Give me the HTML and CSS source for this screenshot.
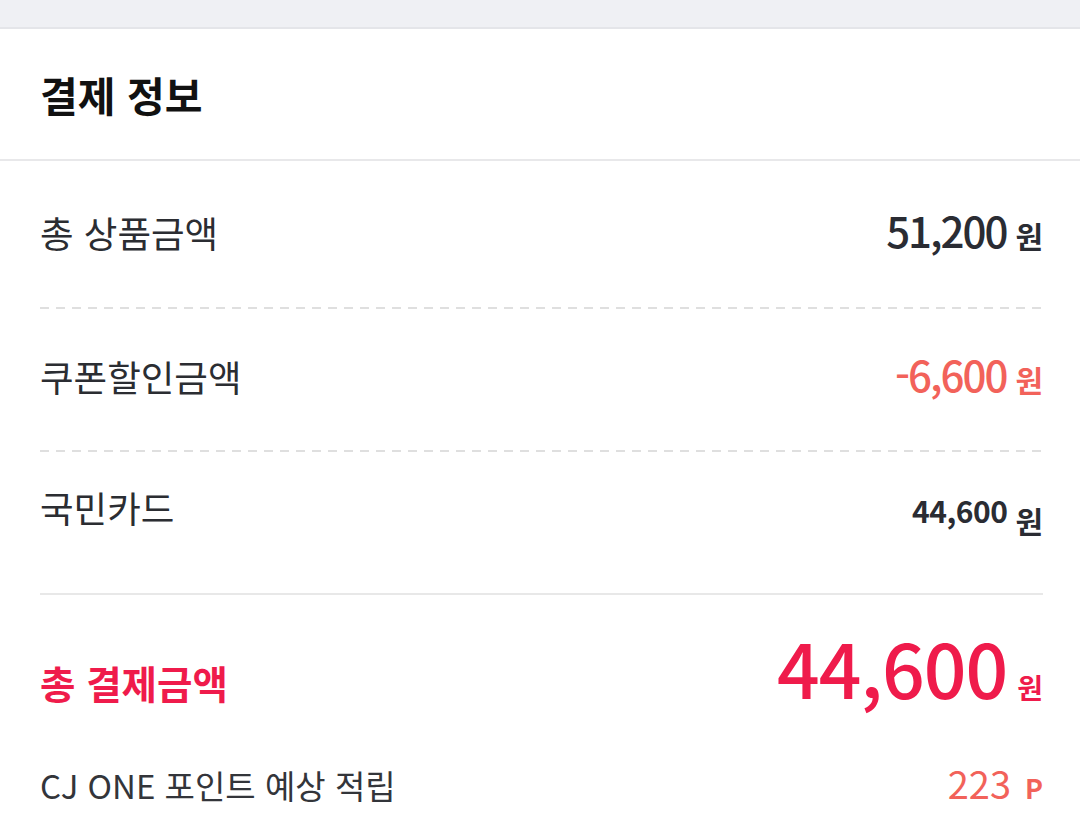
FILE: index.html
```html
<!DOCTYPE html>
<html lang="ko">
<head>
<meta charset="utf-8">
<link rel="stylesheet" href="styles.css">
</head>
<body>
<div class="topbar"></div>
<header class="header"><h1 class="title">결제 정보</h1></header>
<section class="list">
  <div class="row row-1 dashed">
    <span class="label">총 상품금액</span>
    <span class="amount"><span class="num">51,200</span><span class="unit">원</span></span>
  </div>
  <div class="row row-2 dashed">
    <span class="label">쿠폰할인금액</span>
    <span class="amount coupon"><span class="num">-6,600</span><span class="unit">원</span></span>
  </div>
  <div class="row row-3">
    <span class="label">국민카드</span>
    <span class="amount small"><span class="num">44,600</span><span class="unit">원</span></span>
  </div>
  <div class="solid"></div>
  <div class="row total">
    <span class="label">총 결제금액</span>
    <span class="amount"><span class="num">44,600</span><span class="unit">원</span></span>
  </div>
  <div class="row point">
    <span class="label">CJ ONE 포인트 예상 적립</span>
    <span class="amount"><span class="num">223</span><span class="unit">P</span></span>
  </div>
</section>
</body>
</html>
```
FILE: styles.css
```css
html, body {
  margin: 0;
  padding: 0;
  background: #fff;
  font-family: "Noto Sans CJK KR", "Noto Sans", sans-serif;
  color: #2b2d32;
}
.topbar {
  height: 27px;
  background: #eff0f4;
  border-bottom: 2px solid #e4e5e9;
}
.header {
  height: 130px;
  display: flex;
  align-items: center;
  padding: 0 40px;
  border-bottom: 2px solid #e8e8ea;
}
.title {
  margin: 0;
  font-size: 41px;
  line-height: 1;
  font-weight: 700;
  color: #111;
}
.list {
  padding: 0 37px 0 40px;
}
.row {
  display: flex;
  justify-content: space-between;
  align-items: baseline;
  line-height: 1;
}
.label {
  font-size: 36.5px;
  font-weight: 400;
  color: #2b2d32;
}
.amount {
  display: flex;
  align-items: baseline;
  gap: 9px;
  color: #2a2c33;
}
.num {
  font-size: 42px;
  font-weight: 500;
  letter-spacing: -2px;
}
.unit {
  font-size: 30px;
  font-weight: 700;
}
.dashed {
  background-image: repeating-linear-gradient(90deg, #dfdfdf 0 9px, transparent 9px 16px);
  background-size: 100% 2px;
  background-position: left bottom;
  background-repeat: no-repeat;
}
.row-1 { padding: 48px 0 57px; }
.row-2 { padding: 44px 0 57px; }
.row-3 { padding: 38px 0 66px; }
.coupon { color: #f2625a; }
.small { align-items: flex-end; gap: 8px; }
.small .num { font-size: 30px; font-weight: 700; letter-spacing: -0.5px; }
.small .unit { margin-bottom: -10px; }
.solid {
  height: 2px;
  background: #e8e8e8;
}
.total { padding-top: 34px; }
.total .label { font-size: 38.5px; font-weight: 700; color: #ef1b4b; }
.total .amount { color: #ef1b4b; gap: 10px; }
.total .num { font-size: 75px; font-weight: 500; letter-spacing: -1px; }
.total .unit { font-size: 28px; }
.point { padding-top: 60px; }
.point .label { font-size: 33px; color: #33353a; }
.point .amount { color: #f2625a; gap: 14px; }
.point .num { font-size: 38px; font-weight: 400; letter-spacing: 0; }
.point .unit { font-size: 27px; }
```
